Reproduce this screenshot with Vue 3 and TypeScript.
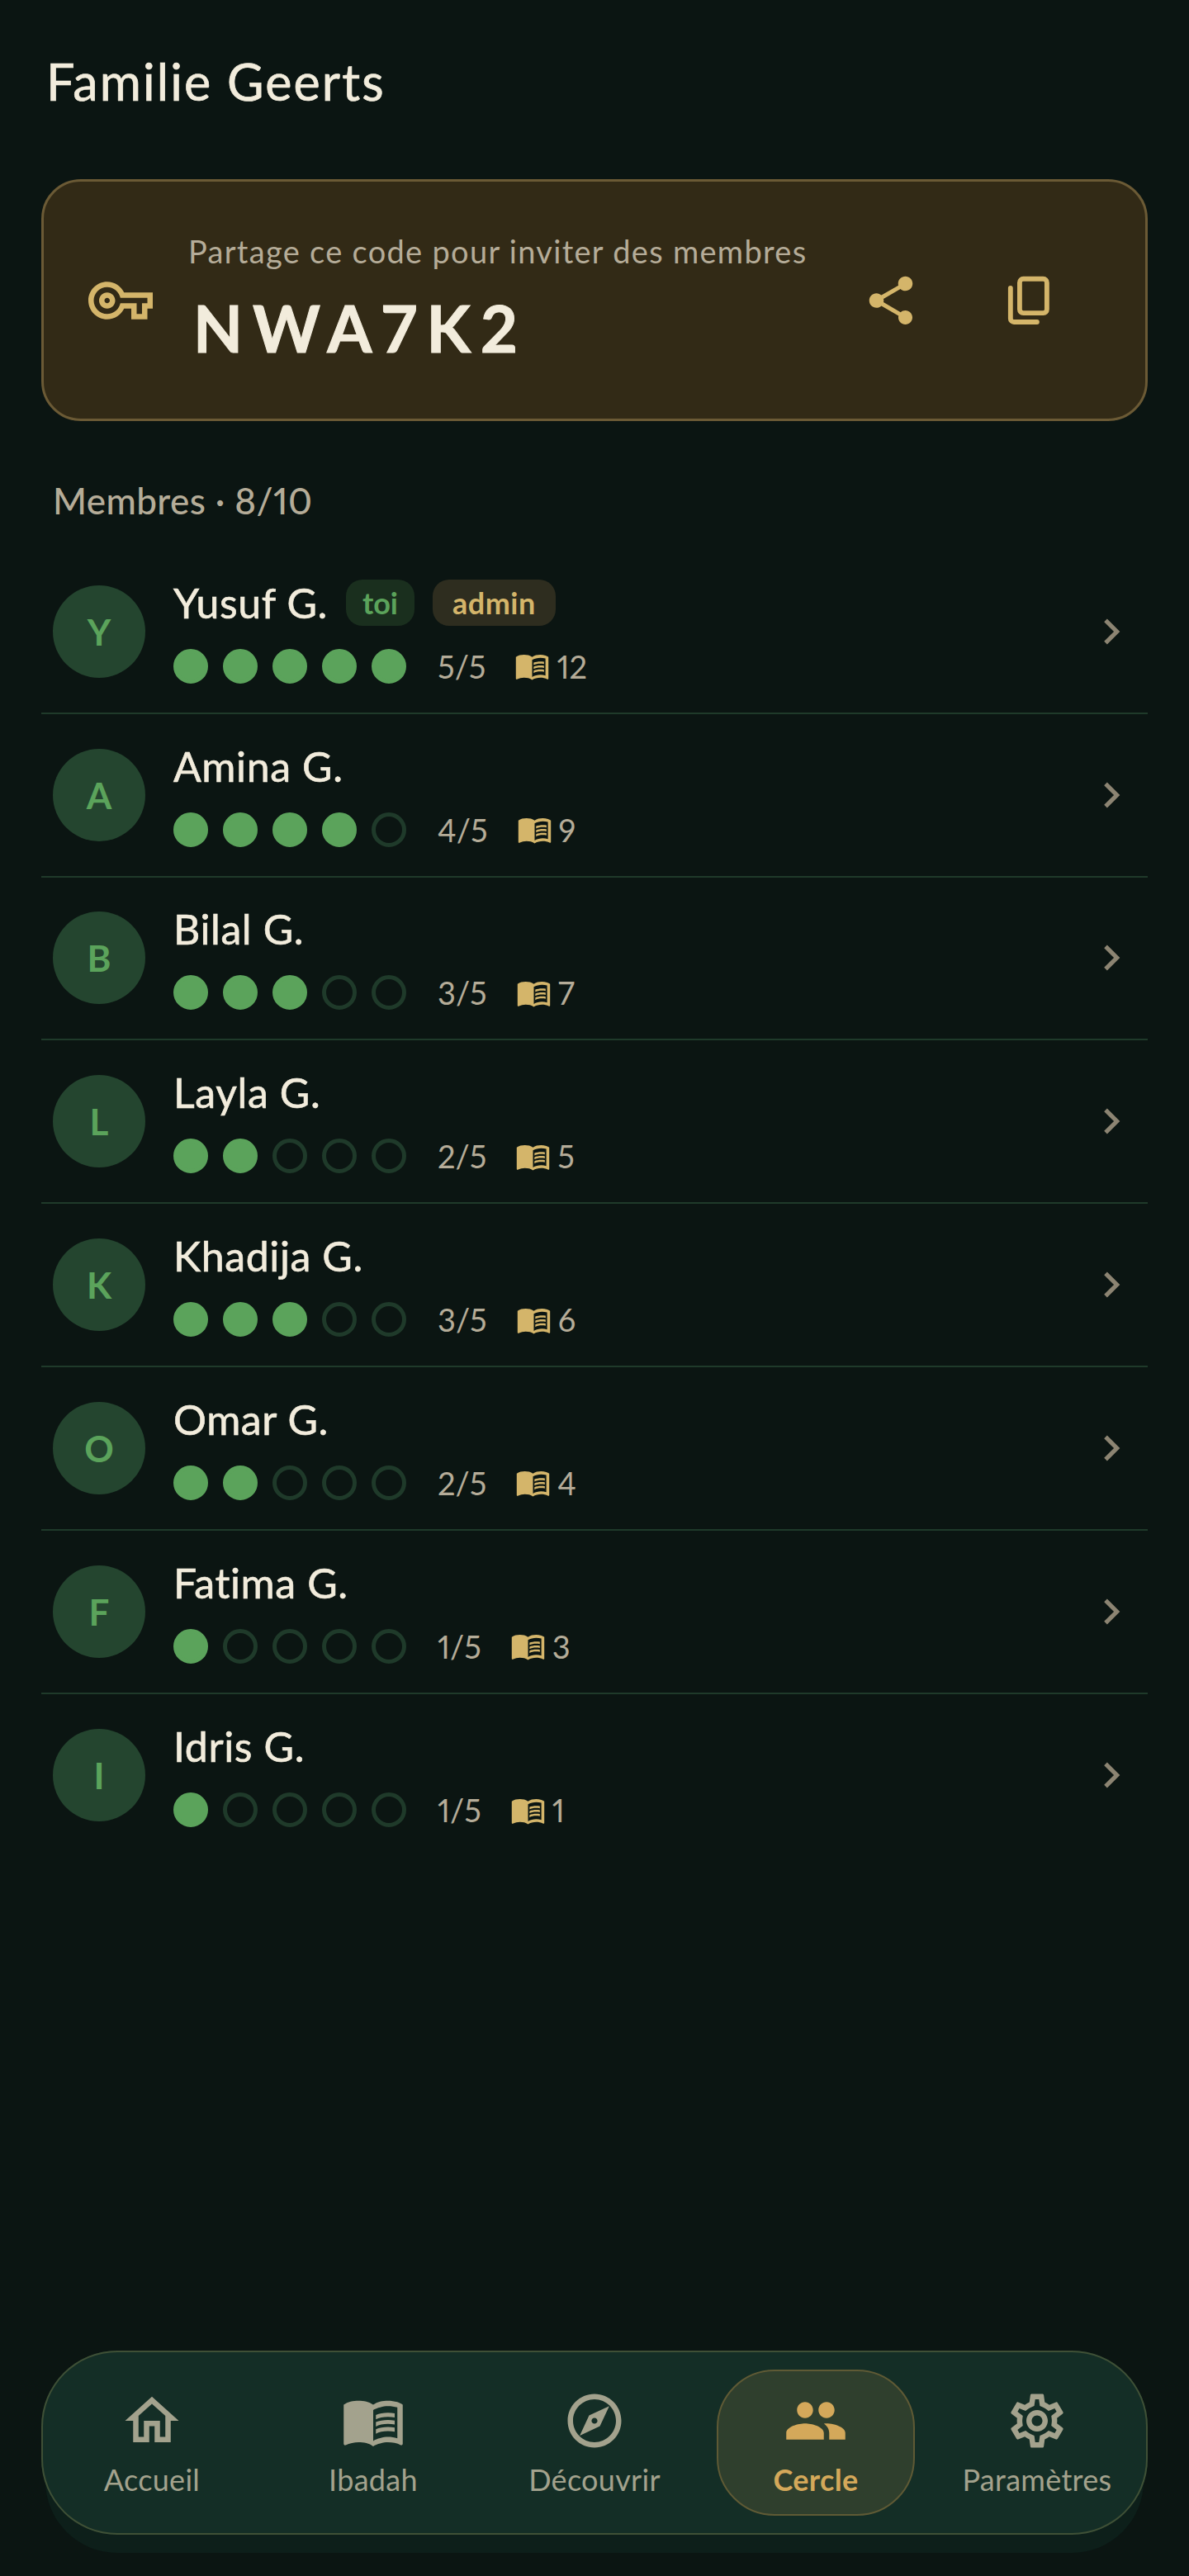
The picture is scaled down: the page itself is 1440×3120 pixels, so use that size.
<template>
  <div class="screen">
    <h1 class="title">Familie Geerts</h1>

    <section class="invite">
      <svg class="key" viewBox="0 0 24 24"><path :d="ICONS.key" /></svg>
      <div class="invite-text">
        <div class="invite-label">Partage ce code pour inviter des membres</div>
        <div class="invite-code">NWA7K2</div>
      </div>
      <svg class="action share" viewBox="0 0 24 24"><path :d="ICONS.share" /></svg>
      <svg class="action copy" viewBox="0 0 24 24" fill="none" stroke-width="2" stroke-linecap="round">
        <rect x="8.2" y="3" width="11.3" height="14.2" rx="1.5" />
        <path d="M4.4 6.8V19.5a1.4 1.4 0 0 0 1.4 1.4H15.4" />
      </svg>
    </section>

    <div class="section-label">Membres · 8/10</div>

    <ul class="members">
      <li v-for="m in members" :key="m.name" class="member">
        <div class="avatar">{{ m.name[0] }}</div>
        <div class="info">
          <div class="name-row">
            <span class="name">{{ m.name }}</span>
            <span v-if="m.me" class="badge badge-me">toi</span>
            <span v-if="m.me" class="badge badge-admin">admin</span>
          </div>
          <div class="stats">
            <div class="dots">
              <span v-for="i in 5" :key="i" class="dot" :class="{ on: i <= m.done }" />
            </div>
            <span class="score">{{ m.done }}/5</span>
            <svg class="book" viewBox="0 0 24 24"><path :d="ICONS.book" /><path :d="ICONS.bookLines" /></svg>
            <span class="pages">{{ m.pages }}</span>
          </div>
        </div>
        <svg class="chevron" viewBox="0 0 24 24"><path :d="ICONS.chevron" /></svg>
      </li>
    </ul>

    <nav class="nav">
      <div v-for="t in tabs" :key="t.label" class="tab" :class="{ active: t.active }">
        <svg class="tab-icon" viewBox="0 0 24 24">
          <path v-for="d in t.paths" :key="d" :d="d" />
        </svg>
        <span class="tab-label">{{ t.label }}</span>
      </div>
    </nav>
  </div>
</template>

<script setup lang="ts">
interface Member {
  name: string
  done: number
  pages: number
  me?: boolean
}

interface Tab {
  label: string
  paths: string[]
  active?: boolean
}

const ICONS = {
  key: 'M22 19h-6v-4h-2.68c-1.14 2.42-3.6 4-6.32 4-3.86 0-7-3.14-7-7s3.14-7 7-7c2.72 0 5.17 1.58 6.32 4H24v6h-2v4zm-4-2h2v-4h2v-2H11.94l-.23-.67C11.01 8.34 9.11 7 7 7c-2.76 0-5 2.24-5 5s2.24 5 5 5c2.11 0 4.01-1.34 4.71-3.33l.23-.67H18v4zM7 15c-1.65 0-3-1.35-3-3s1.35-3 3-3 3 1.35 3 3-1.35 3-3 3zm0-4c-.55 0-1 .45-1 1s.45 1 1 1 1-.45 1-1-.45-1-1-1z',
  share: 'M18 16.08c-.76 0-1.44.3-1.96.77L8.91 12.7c.05-.23.09-.46.09-.7s-.04-.47-.09-.7l7.05-4.11c.54.5 1.25.81 2.04.81 1.66 0 3-1.34 3-3s-1.34-3-3-3-3 1.34-3 3c0 .24.04.47.09.7L8.04 9.81C7.5 9.31 6.79 9 6 9c-1.66 0-3 1.34-3 3s1.34 3 3 3c.79 0 1.5-.31 2.04-.81l7.12 4.16c-.05.21-.08.43-.08.65 0 1.61 1.31 2.92 2.92 2.92 1.61 0 2.92-1.31 2.92-2.92s-1.31-2.92-2.92-2.92z',
  book: 'M21 5c-1.11-.35-2.33-.5-3.5-.5-1.95 0-4.05.4-5.5 1.5-1.45-1.1-3.55-1.5-5.5-1.5S2.45 4.9 1 6v14.65c0 .25.25.5.5.5.1 0 .15-.05.25-.05C3.1 20.45 5.05 20 6.5 20c1.95 0 4.05.4 5.5 1.5 1.35-.85 3.8-1.5 5.5-1.5 1.65 0 3.35.3 4.75 1.05.1.05.15.05.25.05.25 0 .5-.25.5-.5V6c-.6-.45-1.25-.75-2-1zm0 13.5c-1.1-.35-2.3-.5-3.5-.5-1.7 0-4.15.65-5.5 1.5V8c1.35-.85 3.8-1.5 5.5-1.5 1.2 0 2.4.15 3.5.5v11.5z',
  bookLines: 'M17.5 10.5c.88 0 1.73.09 2.5.26V9.24c-.79-.15-1.64-.24-2.5-.24-1.7 0-3.24.29-4.5.83v1.66c1.13-.64 2.7-.99 4.5-.99zM13 12.49v1.66c1.13-.64 2.7-.99 4.5-.99.88 0 1.73.09 2.5.26V11.9c-.79-.15-1.64-.24-2.5-.24-1.7 0-3.24.3-4.5.83zM17.5 14.33c-1.7 0-3.24.29-4.5.83v1.66c1.13-.64 2.7-.99 4.5-.99.88 0 1.73.09 2.5.26v-1.52c-.79-.17-1.64-.24-2.5-.24z',
  chevron: 'M10 6 8.59 7.41 13.17 12l-4.58 4.59L10 18l6-6z',
  home: 'M12 5.69l5 4.5V18h-2v-6H9v6H7v-7.81l5-4.5M12 3L2 12h3v8h6v-6h2v6h6v-8h3L12 3z',
  explore: 'M12 2C6.48 2 2 6.48 2 12s4.48 10 10 10 10-4.48 10-10S17.52 2 12 2zm0 18c-4.41 0-8-3.59-8-8s3.59-8 8-8 8 3.59 8 8-3.59 8-8 8zm-5.5-2.5l7.51-3.49L17.5 6.5 9.99 9.99 6.5 17.5zm5.5-6.6c.61 0 1.1.49 1.1 1.1s-.49 1.1-1.1 1.1-1.1-.49-1.1-1.1.49-1.1 1.1-1.1z',
  people: 'M16 11c1.66 0 2.99-1.34 2.99-3S17.66 5 16 5c-1.66 0-3 1.34-3 3s1.34 3 3 3zm-8 0c1.66 0 2.99-1.34 2.99-3S9.66 5 8 5C6.34 5 5 6.34 5 8s1.34 3 3 3zm0 2c-2.33 0-7 1.17-7 3.5V19h14v-2.5c0-2.33-4.67-3.5-7-3.5zm8 0c-.29 0-.62.02-.97.05 1.16.84 1.97 1.97 1.97 3.45V19h6v-2.5c0-2.33-4.67-3.5-7-3.5z',
  settings: 'M19.43 12.98c.04-.32.07-.64.07-.98 0-.34-.03-.66-.07-.98l2.11-1.65c.19-.15.24-.42.12-.64l-2-3.46c-.09-.16-.26-.25-.44-.25-.06 0-.12.01-.17.03l-2.49 1c-.52-.4-1.08-.73-1.69-.98l-.38-2.65C14.46 2.18 14.25 2 14 2h-4c-.25 0-.46.18-.49.42l-.38 2.65c-.61.25-1.17.59-1.69.98l-2.49-1c-.06-.02-.12-.03-.18-.03-.17 0-.34.09-.43.25l-2 3.46c-.13.22-.07.49.12.64l2.11 1.65c-.04.32-.07.65-.07.98 0 .33.03.66.07.98l-2.11 1.65c-.19.15-.24.42-.12.64l2 3.46c.09.16.26.25.44.25.06 0 .12-.01.17-.03l2.49-1c.52.4 1.08.73 1.69.98l.38 2.65c.03.24.24.42.49.42h4c.25 0 .46-.18.49-.42l.38-2.65c.61-.25 1.17-.59 1.69-.98l2.49 1c.06.02.12.03.18.03.17 0 .34-.09.43-.25l2-3.46c.12-.22.07-.49-.12-.64l-2.11-1.65zm-1.98-1.71c.04.31.05.52.05.73 0 .21-.02.43-.05.73l-.14 1.13.89.7 1.08.84-.7 1.21-1.27-.51-1.04-.42-.9.68c-.43.32-.84.56-1.25.73l-1.06.43-.16 1.13-.2 1.35h-1.4l-.19-1.35-.16-1.13-1.06-.43c-.43-.18-.83-.41-1.23-.71l-.91-.7-1.06.43-1.27.51-.7-1.21 1.08-.84.89-.7-.14-1.13c-.03-.31-.05-.54-.05-.74s.02-.43.05-.73l.14-1.13-.89-.7-1.08-.84.7-1.21 1.27.51 1.04.42.9-.68c.43-.32.84-.56 1.25-.73l1.06-.43.16-1.13.2-1.35h1.39l.19 1.35.16 1.13 1.06.43c.43.18.83.41 1.23.71l.91.7 1.06-.43 1.27-.51.7 1.21-1.07.85-.89.7.14 1.13zM12 8c-2.21 0-4 1.79-4 4s1.79 4 4 4 4-1.79 4-4-1.79-4-4-4zm0 6c-1.1 0-2-.9-2-2s.9-2 2-2 2 .9 2 2-.9 2-2 2z',
}

const members: Member[] = [
  { name: 'Yusuf G.', done: 5, pages: 12, me: true },
  { name: 'Amina G.', done: 4, pages: 9 },
  { name: 'Bilal G.', done: 3, pages: 7 },
  { name: 'Layla G.', done: 2, pages: 5 },
  { name: 'Khadija G.', done: 3, pages: 6 },
  { name: 'Omar G.', done: 2, pages: 4 },
  { name: 'Fatima G.', done: 1, pages: 3 },
  { name: 'Idris G.', done: 1, pages: 1 },
]

const tabs: Tab[] = [
  { label: 'Accueil', paths: [ICONS.home] },
  { label: 'Ibadah', paths: [ICONS.book, ICONS.bookLines] },
  { label: 'Découvrir', paths: [ICONS.explore] },
  { label: 'Cercle', paths: [ICONS.people], active: true },
  { label: 'Paramètres', paths: [ICONS.settings] },
]
</script>

<style>
html,
body {
  background: #0b1512;
}
</style>

<style scoped>
.screen {
  background: #0b1512;
  box-sizing: border-box;
  display: flex;
  flex-direction: column;
  font-family: Lato, 'Noto Sans', sans-serif;
  font-variant-numeric: proportional-nums;
  height: 3120px;
  padding: 0 50px 50px;
  width: 1440px;
}

.title {
  -webkit-text-stroke: 0.7px #f2ecdc;
  color: #f2ecdc;
  font-size: 61px;
  font-weight: 400;
  letter-spacing: 2.1px;
  line-height: 76px;
  margin: 61px 0 0 6px;
}

.invite {
  align-items: center;
  background: #322a16;
  border: 3px solid #6b5a35;
  border-radius: 48px;
  box-sizing: border-box;
  display: flex;
  height: 293px;
  margin-top: 80px;
  padding-left: 54px;
}

.key {
  fill: #d4b56a;
  flex: none;
  height: 78px;
  width: 78px;
}

.invite-text {
  flex: 1;
  margin: 0 0 6px 43px;
}

.invite-label {
  color: #b5ac98;
  font-size: 38px;
  letter-spacing: 1.3px;
  line-height: 48px;
}

.invite-code {
  -webkit-text-stroke: 1px #f2ecdc;
  color: #f2ecdc;
  font-size: 78px;
  font-weight: 700;
  letter-spacing: 12px;
  line-height: 90px;
  margin: 24px 0 0 6px;
}

.action {
  flex: none;
  height: 70px;
  width: 70px;
}

.share {
  fill: #d4b56a;
}

.copy {
  margin: 0 106px 0 97px;
  stroke: #d4b56a;
}

.section-label {
  color: #b5ac98;
  font-size: 44px;
  font-weight: 500;
  letter-spacing: 0.4px;
  line-height: 56px;
  margin: 68px 0 0 14px;
}

.members {
  list-style: none;
  margin: 33px 0 0;
  padding: 0;
}

.member {
  align-items: center;
  border-bottom: 2px solid #1f3a2a;
  box-sizing: border-box;
  display: flex;
  height: 197.8px;
  padding: 0 13px 0 14px;
}

.member:last-child {
  border-bottom: none;
}

.avatar {
  align-items: center;
  background: #24452f;
  border-radius: 50%;
  color: #5ba35b;
  display: flex;
  flex: none;
  font-size: 44px;
  font-weight: 700;
  height: 112px;
  justify-content: center;
  width: 112px;
}

.info {
  flex: 1;
  margin-left: 34px;
}

.name-row {
  align-items: center;
  display: flex;
  height: 56px;
}

.name {
  -webkit-text-stroke: 0.6px #f2ecdc;
  color: #f2ecdc;
  font-size: 50px;
  font-weight: 400;
  letter-spacing: 0.6px;
  line-height: 56px;
}

.badge {
  align-items: center;
  border-radius: 20px;
  display: flex;
  font-size: 36px;
  font-weight: 700;
  height: 56px;
}

.badge-me {
  background: #1a2f1e;
  color: #5ba35b;
  margin-left: 22px;
  padding: 0 20px;
}

.badge-admin {
  background: #2e2d1f;
  color: #d4b56a;
  letter-spacing: 0.5px;
  margin-left: 22px;
  padding: 0 24px;
}

.stats {
  align-items: center;
  display: flex;
  height: 42px;
  margin-top: 28px;
}

.dots {
  display: flex;
  gap: 18px;
}

.dot {
  border: 5px solid #1f3a2a;
  border-radius: 50%;
  box-sizing: border-box;
  height: 42px;
  width: 42px;
}

.dot.on {
  background: #5ba35b;
  border-color: #5ba35b;
}

.score,
.pages {
  color: #b5ac98;
  font-size: 38px;
}

.score {
  margin-left: 38px;
}

.book {
  fill: #d4b56a;
  flex: none;
  height: 43px;
  margin-left: 35px;
  width: 43px;
}

.pages {
  margin-left: 8px;
}

.chevron {
  fill: #8c8472;
  flex: none;
  height: 62px;
  width: 62px;
}

.nav {
  background: #142e26;
  border-radius: 92px;
  box-shadow:
    inset 0 0 0 2px #3f5036,
    0 27px 0 -5px #0d1f1a;
  box-sizing: border-box;
  display: grid;
  grid-template-columns: repeat(5, 1fr);
  height: 223px;
  margin-top: auto;
  padding: 23px 0;
}

.tab {
  align-items: center;
  border: 2px solid transparent;
  border-radius: 70px;
  box-sizing: border-box;
  color: #a3a28d;
  display: flex;
  flex-direction: column;
  margin: 0 14px;
}

.tab.active {
  background: #2f3f2d;
  border-color: #5f5a35;
  color: #d4a85a;
}

.tab-icon {
  fill: currentColor;
  height: 78px;
  margin-top: 21px;
  width: 78px;
}

.tab-label {
  font-size: 36px;
  letter-spacing: 0.3px;
  line-height: 46px;
  margin-top: 9px;
}

.tab.active .tab-label {
  font-weight: 700;
}
</style>
